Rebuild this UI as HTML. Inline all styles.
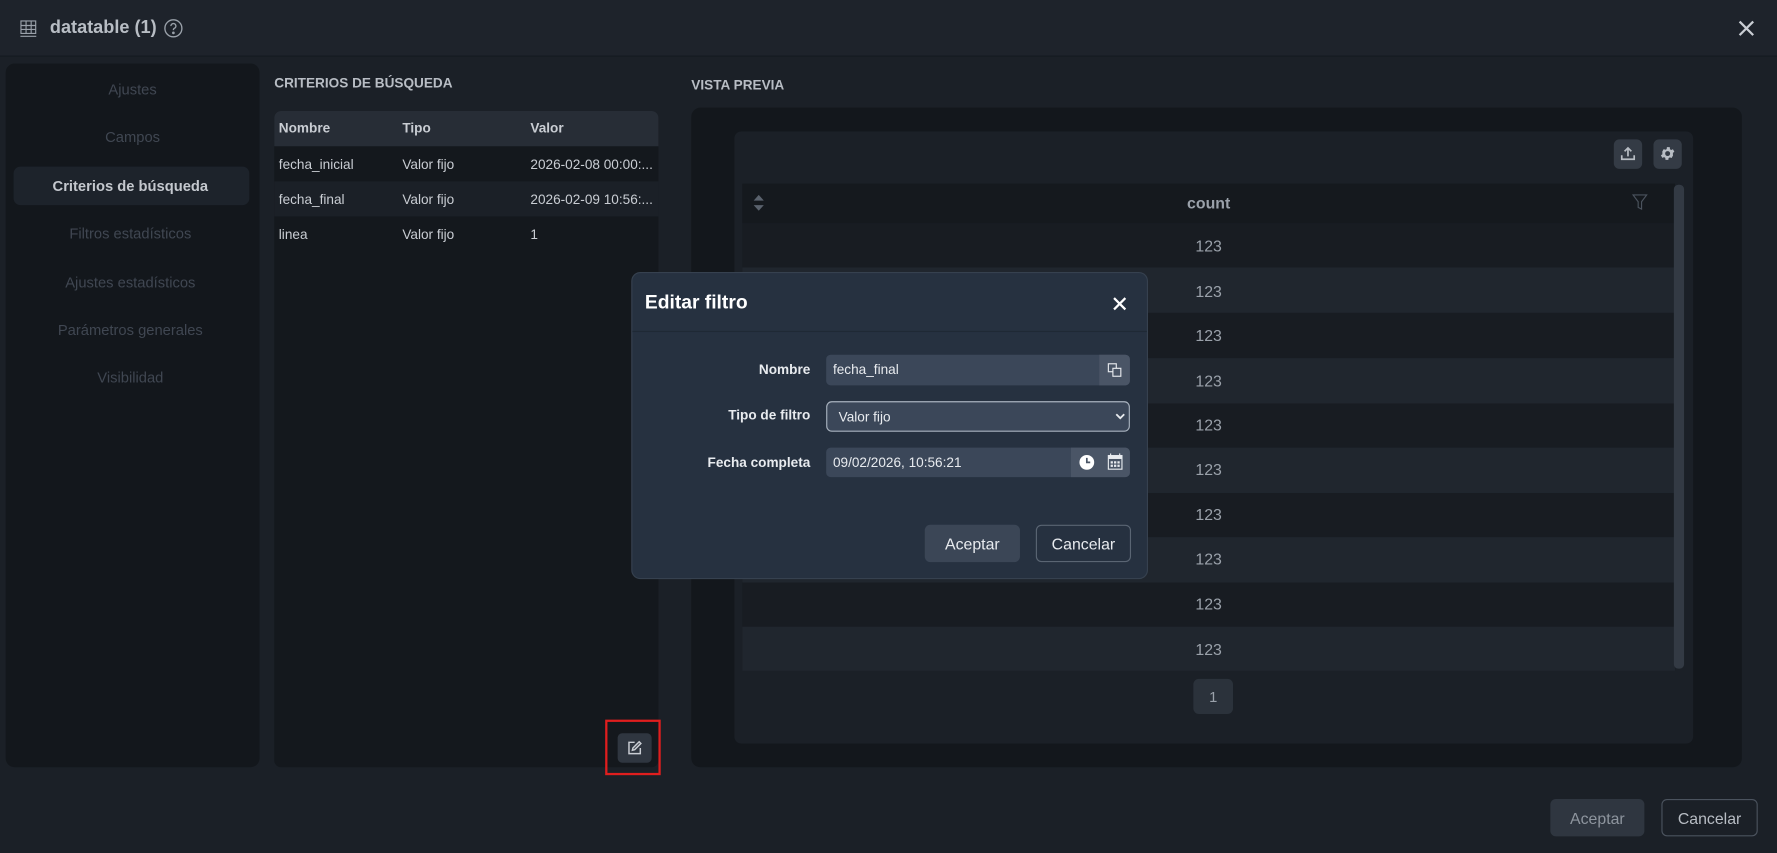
<!DOCTYPE html>
<html><head><meta charset="utf-8"><style>
*{box-sizing:border-box;margin:0;padding:0}
html,body{width:1777px;height:853px;overflow:hidden;background:#1a1f26;font-family:"Liberation Sans",sans-serif}
#w{position:absolute;left:0;top:0;width:1568px;height:753px;transform:scale(1.13329);transform-origin:0 0;background:#1b2027}
.a{position:absolute}
.t{position:absolute;white-space:nowrap;transform:translateY(-50%)}
.nav{left:0;width:224px;text-align:center;font-size:13px;color:#404752}
.c{font-size:12px;color:#c9cdd3}
.n{left:655px;width:823px;text-align:center;font-size:14px;color:#9aa1aa}
</style></head><body><div id="w">
<div class="a" style="left:0;top:0;width:1568px;height:50px;background:#1e232b;border-bottom:1px solid #151a20"></div>
<svg class="a" style="left:17px;top:17px" width="16" height="16" viewBox="0 0 16 16" fill="none" stroke="#9aa1aa" stroke-width="1"><rect x="1.5" y="1.5" width="13" height="11"/><path d="M1.5 5.5h13M1.5 9h13M6 1.5v11M10.5 1.5v11M1 15h14"/></svg>
<div class="t" style="left:44px;top:25px;font-size:16px;font-weight:bold;color:#b8bdc4">datatable (1)</div>
<svg class="a" style="left:144px;top:16px" width="18" height="18" viewBox="0 0 18 18" fill="none" stroke="#9aa1aa" stroke-width="1.2"><circle cx="9" cy="9" r="7.5"/><path d="M6.8 7a2.2 2.2 0 1 1 3 2c-.7.3-.8.8-.8 1.6"/><circle cx="9" cy="13" r=".6" fill="#9aa1aa"/></svg>
<svg class="a" style="left:1534px;top:18px" width="14" height="14" viewBox="0 0 14 14" stroke="#c9cdd3" stroke-width="2"><path d="M1 1l12 12M13 1L1 13"/></svg>

<div class="a" style="left:5px;top:56px;width:224px;height:621px;background:#13171c;border-radius:8px"></div>
<div class="a" style="left:12px;top:147px;width:208px;height:34px;background:#1d232b;border-radius:6px"></div>
<div class="t nav" style="left:5px;top:79px">Ajustes</div>
<div class="t nav" style="left:5px;top:121px">Campos</div>
<div class="t nav" style="left:3px;top:164px;color:#c4c8ce;font-weight:bold">Criterios de búsqueda</div>
<div class="t nav" style="left:3px;top:206px">Filtros estadísticos</div>
<div class="t nav" style="left:3px;top:249px">Ajustes estadísticos</div>
<div class="t nav" style="left:3px;top:291px">Parámetros generales</div>
<div class="t nav" style="left:3px;top:333px">Visibilidad</div>

<div class="t" style="left:242px;top:73px;font-size:12px;font-weight:bold;color:#b8bdc4">CRITERIOS DE BÚSQUEDA</div>
<div class="a" style="left:242px;top:98px;width:339px;height:579px;background:#14181d;border-radius:6px"></div>
<div class="a" style="left:242px;top:98px;width:339px;height:31px;background:#272d36;border-radius:6px 6px 0 0"></div>
<div class="a" style="left:242px;top:160px;width:339px;height:31px;background:#1b2027"></div>
<div class="t c" style="left:246px;top:113px;font-weight:bold">Nombre</div><div class="t c" style="left:355px;top:113px;font-weight:bold">Tipo</div><div class="t c" style="left:468px;top:113px;font-weight:bold">Valor</div>
<div class="t c" style="left:246px;top:145px">fecha_inicial</div><div class="t c" style="left:355px;top:145px">Valor fijo</div><div class="t c" style="left:468px;top:145px">2026-02-08 00:00:...</div>
<div class="t c" style="left:246px;top:176px">fecha_final</div><div class="t c" style="left:355px;top:176px">Valor fijo</div><div class="t c" style="left:468px;top:176px">2026-02-09 10:56:...</div>
<div class="t c" style="left:246px;top:207px">linea</div><div class="t c" style="left:355px;top:207px">Valor fijo</div><div class="t c" style="left:468px;top:207px">1</div>
<div class="a" style="left:534px;top:635px;width:49px;height:49px;border:2px solid #e01e1e"></div>
<div class="a" style="left:545px;top:647px;width:30px;height:26px;background:#2f3640;border-radius:4px"></div>
<svg class="a" style="left:553px;top:653px" width="14" height="14" viewBox="0 0 14 14" fill="none" stroke="#c9cdd3" stroke-width="1.3"><path d="M7 2H2v10h10V7"/><path d="M11 1.5l1.5 1.5L7 8.5 5 9l.5-2z"/></svg>

<div class="t" style="left:610px;top:75px;font-size:12px;font-weight:bold;color:#b8bdc4">VISTA PREVIA</div>
<div class="a" style="left:610px;top:95px;width:927px;height:582px;background:#13171c;border-radius:8px"></div>
<div class="a" style="left:648px;top:116px;width:846px;height:540px;background:#1b2027;border-radius:6px"></div>
<div class="a" style="left:1424px;top:123px;width:25px;height:26px;background:#343b45;border-radius:5px"></div>
<div class="a" style="left:1459px;top:123px;width:25px;height:26px;background:#343b45;border-radius:5px"></div>
<svg class="a" style="left:1430px;top:129px" width="13" height="13" viewBox="0 0 13 13" fill="none" stroke="#b8bdc4" stroke-width="1.5"><path d="M6.5 9V1.5M3.5 4.5l3-3 3 3M1 8v3.5h11V8"/></svg>
<svg class="a" style="left:1464px;top:128px" width="15" height="15" viewBox="0 0 24 24" fill="#b8bdc4"><path d="M19.4 13a7.5 7.5 0 0 0 0-2l2.1-1.6-2-3.5-2.5 1a7.5 7.5 0 0 0-1.7-1L15 3h-4l-.4 2.7a7.5 7.5 0 0 0-1.7 1l-2.5-1-2 3.5L4.6 11a7.5 7.5 0 0 0 0 2l-2.1 1.6 2 3.5 2.5-1a7.5 7.5 0 0 0 1.7 1L9 21h4l.4-2.7a7.5 7.5 0 0 0 1.7-1l2.5 1 2-3.5zM12 15.5a3.5 3.5 0 1 1 0-7 3.5 3.5 0 0 1 0 7z"/></svg>
<div class="a" style="left:655px;top:162px;width:823px;height:35px;background:#15191e"></div>
<svg class="a" style="left:665px;top:172px" width="9" height="14" viewBox="0 0 9 14" fill="#5a626d"><path d="M4.5 0L9 5H0zM4.5 14L0 9h9z"/></svg>
<div class="t" style="left:655px;width:823px;text-align:center;top:179px;font-size:14px;font-weight:bold;color:#9aa1aa">count</div>
<svg class="a" style="left:1440px;top:171px" width="14" height="15" viewBox="0 0 14 15" fill="none" stroke="#4b535e" stroke-width="1"><path d="M1 1h12L8.5 7v6.5l-3-1.5V7z"/></svg>
<div class="a" style="left:655px;top:197px;width:823px;height:395px;background:#181c22"></div>
<div class="a" style="left:655px;top:236px;width:823px;height:40px;background:#20262e"></div>
<div class="a" style="left:655px;top:316px;width:823px;height:40px;background:#20262e"></div>
<div class="a" style="left:655px;top:395px;width:823px;height:40px;background:#20262e"></div>
<div class="a" style="left:655px;top:474px;width:823px;height:40px;background:#20262e"></div>
<div class="a" style="left:655px;top:553px;width:823px;height:39px;background:#20262e"></div>
<div class="t n" style="top:217px">123</div><div class="t n" style="top:257px">123</div><div class="t n" style="top:296px">123</div><div class="t n" style="top:336px">123</div><div class="t n" style="top:375px">123</div><div class="t n" style="top:414px">123</div><div class="t n" style="top:454px">123</div><div class="t n" style="top:493px">123</div><div class="t n" style="top:533px">123</div><div class="t n" style="top:573px">123</div>
<div class="a" style="left:1477px;top:163px;width:9px;height:427px;background:#333a44;border-radius:4px"></div>
<div class="a" style="left:1053px;top:599px;width:35px;height:31px;background:#2b323b;border-radius:5px"></div>
<div class="t" style="left:1053px;width:35px;text-align:center;top:615px;font-size:13px;color:#9aa1aa">1</div>

<div class="a" style="left:1368px;top:705px;width:83px;height:33px;background:#2f3640;border-radius:5px"></div>
<div class="t" style="left:1368px;width:83px;text-align:center;top:722px;font-size:14px;color:#8e959e">Aceptar</div>
<div class="a" style="left:1466px;top:705px;width:85px;height:33px;border:1px solid #4b535e;border-radius:5px"></div>
<div class="t" style="left:1466px;width:85px;text-align:center;top:722px;font-size:14px;color:#b8bdc4">Cancelar</div>

<div class="a" style="left:557px;top:240px;width:456px;height:271px;background:#263140;border-radius:8px;border:1px solid #36414f"></div>
<div class="a" style="left:558px;top:292px;width:454px;height:1px;background:#1f2935"></div>
<div class="t" style="left:569px;top:267px;font-size:17px;font-weight:bold;color:#fff">Editar filtro</div>
<svg class="a" style="left:982px;top:262px" width="12" height="12" viewBox="0 0 12 12" stroke="#fff" stroke-width="2"><path d="M1 1l10 10M11 1L1 11"/></svg>
<div class="t" style="right:853px;top:326px;font-size:12px;font-weight:bold;color:#e8ebef">Nombre</div>
<div class="t" style="right:853px;top:366px;font-size:12px;font-weight:bold;color:#e8ebef">Tipo de filtro</div>
<div class="t" style="right:853px;top:408px;font-size:12px;font-weight:bold;color:#e8ebef">Fecha completa</div>
<div class="a" style="left:729px;top:313px;width:268px;height:27px;background:#3b4759;border-radius:4px"></div>
<div class="a" style="left:970px;top:313px;width:27px;height:27px;background:#4a5566;border-radius:0 4px 4px 0"></div>
<svg class="a" style="left:977px;top:320px" width="13" height="13" viewBox="0 0 13 13" fill="none" stroke="#e8ebef" stroke-width="1"><rect x="1" y="1" width="7" height="7"/><rect x="5" y="5" width="7" height="7" fill="#4a5566"/></svg>
<div class="t" style="left:735px;top:326px;font-size:12px;color:#e8ebef">fecha_final</div>
<div class="a" style="left:729px;top:354px;width:268px;height:27px;background:#3b4759;border-radius:5px;border:1px solid #a9b3bf"></div>
<div class="t" style="left:740px;top:368px;font-size:12px;color:#e8ebef">Valor fijo</div>
<svg class="a" style="left:984px;top:364px" width="9" height="7" viewBox="0 0 9 7" fill="none" stroke="#e8ebef" stroke-width="1.6"><path d="M1 1.5l3.5 3.5L8 1.5"/></svg>
<div class="a" style="left:729px;top:395px;width:268px;height:26px;background:#3b4759;border-radius:4px"></div>
<div class="a" style="left:945px;top:395px;width:52px;height:26px;background:#4a5566;border-radius:0 4px 4px 0"></div>
<svg class="a" style="left:952px;top:401px" width="14" height="14" viewBox="0 0 14 14"><circle cx="7" cy="7" r="6.5" fill="#fff"/><path d="M7 3v4h3" stroke="#4a5566" stroke-width="1.5" fill="none"/></svg>
<svg class="a" style="left:977px;top:400px" width="14" height="15" viewBox="0 0 14 15" fill="#e8ebef"><rect x="1" y="2" width="12" height="12" fill="none" stroke="#e8ebef"/><rect x="1" y="2" width="12" height="3"/><path d="M3 0v3M11 0v3" stroke="#e8ebef"/><rect x="3" y="7" width="2" height="2"/><rect x="6" y="7" width="2" height="2"/><rect x="9" y="7" width="2" height="2"/><rect x="3" y="10" width="2" height="2"/><rect x="6" y="10" width="2" height="2"/><rect x="9" y="10" width="2" height="2"/></svg>
<div class="t" style="left:735px;top:408px;font-size:12px;color:#e8ebef">09/02/2026, 10:56:21</div>
<div class="a" style="left:816px;top:463px;width:84px;height:33px;background:#3b4656;border-radius:5px"></div>
<div class="t" style="left:816px;width:84px;text-align:center;top:480px;font-size:14px;color:#e8ebef">Aceptar</div>
<div class="a" style="left:914px;top:463px;width:84px;height:33px;border:1px solid #5a6573;border-radius:5px"></div>
<div class="t" style="left:914px;width:84px;text-align:center;top:480px;font-size:14px;color:#e8ebef">Cancelar</div>
</div></body></html>
